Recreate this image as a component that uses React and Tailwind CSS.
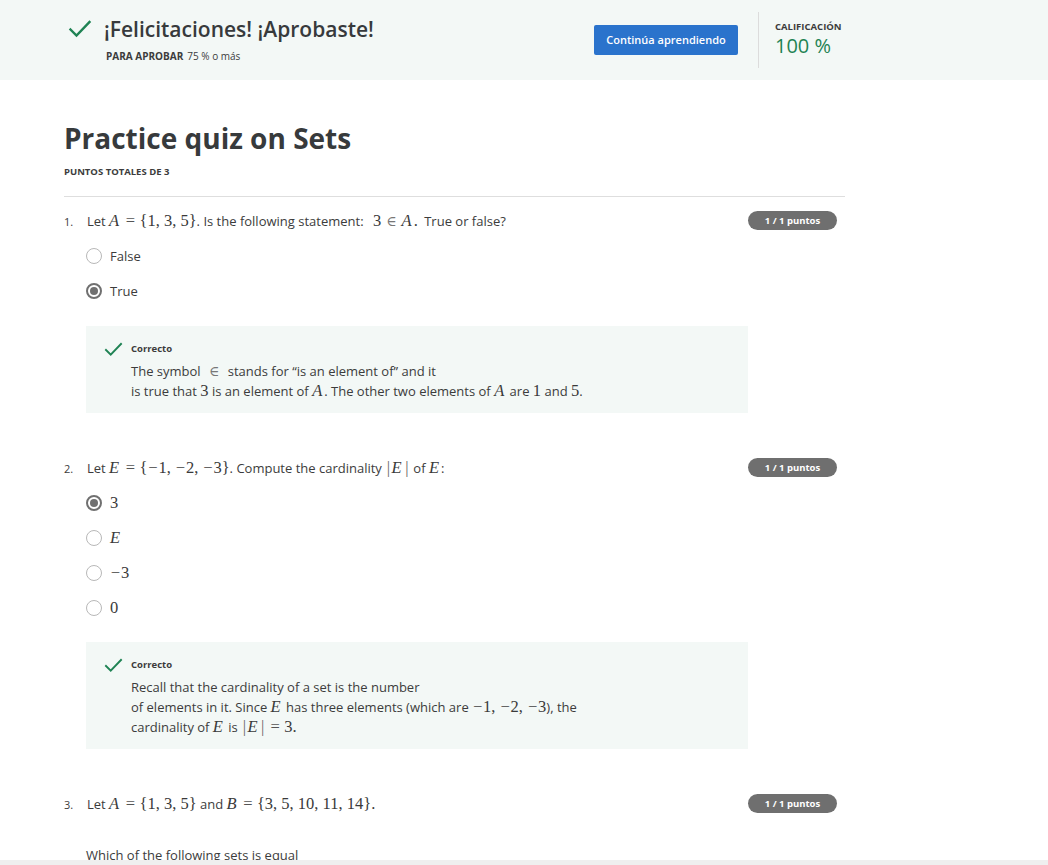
import React from 'react';

const Check = ({ className = 'w-[22px] h-[22px]' }) => (
  <svg viewBox="0 0 24 24" className={className} fill="none" stroke="#1f8354" strokeWidth="2.4" strokeLinecap="square">
    <path d="M2.5 12.5l6 6L21.5 5" />
  </svg>
);

const M = ({ children }) => (
  <span className="font-['Liberation_Serif',serif] text-[16.5px] leading-[10px] text-[#3a3a3a]">{children}</span>
);
const V = ({ children }) => <i className="font-['Liberation_Serif',serif] pr-[2px]">{children}</i>;
const Op = ({ children }) => <span className="mx-[4.5px] text-[#555]">{children}</span>;
const Mi = () => <span className="inline-block w-[11px] text-center text-[#555]">−</span>;
const Bar = () => <span className="px-[1.5px] text-[#666]">|</span>;
const In = () => <span className="mx-[5px] font-['DejaVu_Serif',serif] text-[14px] text-[#777]">∈</span>;

const Badge = () => (
  <span className="shrink-0 mr-[8px] inline-flex items-center justify-center w-[89px] h-[19px] rounded-full bg-[#6f6f6f] text-white text-[9.5px] font-bold">
    1 / 1 puntos
  </span>
);

const Radio = ({ checked, children }) => (
  <div className="flex items-center h-[35px]">
    {checked ? (
      <span className="w-[16px] h-[16px] rounded-full border-2 border-[#707070] flex items-center justify-center">
        <span className="w-[8px] h-[8px] rounded-full bg-[#707070]" />
      </span>
    ) : (
      <span className="w-[16px] h-[16px] rounded-full border-[1.5px] border-[#b8b8b8]" />
    )}
    <span className="ml-[8px] text-[13px] leading-[20px] text-[#3c3c3c]">{children}</span>
  </div>
);

const Question = ({ num, text, children }) => (
  <div>
    <div className="flex items-start justify-between">
      <div className="flex items-baseline text-[13px] leading-[20px] text-[#3c3c3c]">
        <span className="w-[23px] text-[11px]">{num}.</span>
        <span>{text}</span>
      </div>
      <Badge />
    </div>
    {children}
  </div>
);

const Feedback = ({ children }) => (
  <div className="ml-[22px] w-[662px] bg-[#f3f8f6] pt-[15px] pb-[12px] pl-[18px]">
    <div className="flex items-center h-[16px]">
      <Check className="w-[19px] h-[19px]" />
      <span className="ml-[8px] text-[9.5px] font-bold text-[#3c3c3c]">Correcto</span>
    </div>
    <div className="ml-[27px] mt-[4px] text-[13px] leading-[20px] text-[#3c3c3c]">{children}</div>
  </div>
);

export default function App() {
  return (
    <div className="h-screen flex flex-col bg-white font-['Open_Sans',sans-serif] text-[#373a3c]">
      <div className="flex-1 overflow-hidden">
        <header className="h-[80px] bg-[#f3f8f6] flex items-center">
          <div className="ml-[68px] w-[780px] flex items-center justify-between">
            <div className="flex flex-col mt-[-2px]">
              <div className="flex items-center">
                <Check className="w-[24px] h-[24px]" />
                <h1 className="ml-[12px] text-[21px] font-semibold leading-[30px] text-[#373a3c]">
                  ¡Felicitaciones! ¡Aprobaste!
                </h1>
              </div>
              <div className="ml-[38px] mt-[5px] text-[10px] text-[#3c3c3c]">
                <span className="font-bold">PARA APROBAR</span>
                <span className="ml-[4px]">75 % o más</span>
              </div>
            </div>
            <div className="flex items-center">
              <button className="w-[144px] h-[30px] rounded-[2px] bg-[#2a73cc] text-white text-[11px] font-semibold">
                Continúa aprendiendo
              </button>
              <div className="ml-[20px] w-px h-[56px] bg-[#dcdcdc]" />
              <div className="ml-[16px] w-[73px] flex flex-col">
                <span className="text-[9.5px] font-bold text-[#3c3c3c] leading-[12px]">CALIFICACIÓN</span>
                <span className="text-[20px] leading-[26px] text-[#1f8354]">100 %</span>
              </div>
            </div>
          </div>
        </header>

        <main className="ml-[64px] w-[781px]">
          <h2 className="mt-[39px] text-[28px] font-bold leading-[38px] text-[#373a3c]">Practice quiz on Sets</h2>
          <div className="mt-[8px] text-[9.5px] font-bold text-[#3c3c3c]">PUNTOS TOTALES DE 3</div>
          <div className="mt-[17px] h-px bg-[#dedede]" />

          <div className="mt-[14px]">
            <Question
              num="1"
              text={
                <>
                  Let <M><V>A</V><Op>=</Op>{'{'}1, 3, 5{'}'}</M>. Is the following statement:{' '}
                  <M><span className="ml-[6px]">3</span><In /><V>A</V>.</M>{' '}
                  <span className="ml-[3px]">True or false?</span>
                </>
              }
            >
              <div className="ml-[22px] mt-[6px]">
                <Radio>False</Radio>
                <Radio checked>True</Radio>
              </div>
              <div className="mt-[18px]">
                <Feedback>
                  The symbol <In /> stands for “is an element of” and it
                  <br />
                  is true that <M>3</M> is an element of <M><V>A</V></M>. The other two elements of{' '}
                  <M><V>A</V></M> are <M>1</M> and <M>5</M>.
                </Feedback>
              </div>
            </Question>
          </div>

          <div className="mt-[45px]">
            <Question
              num="2"
              text={
                <>
                  Let <M><V>E</V><Op>=</Op>{'{'}<Mi />1, <Mi />2, <Mi />3{'}'}</M>. Compute the cardinality{' '}
                  <M><Bar /><V>E</V><Bar /></M> of <M><V>E</V></M>:
                </>
              }
            >
              <div className="ml-[22px] mt-[6px]">
                <Radio checked><M>3</M></Radio>
                <Radio><M><V>E</V></M></Radio>
                <Radio><M><Mi />3</M></Radio>
                <Radio><M>0</M></Radio>
              </div>
              <div className="mt-[17px]">
                <Feedback>
                  Recall that the cardinality of a set is the number
                  <br />
                  of elements in it. Since <M><V>E</V></M> has three elements (which are{' '}
                  <M><Mi />1, <Mi />2, <Mi />3</M>), the
                  <br />
                  cardinality of <M><V>E</V></M> is <M><Bar /><V>E</V><Bar /><Op>=</Op>3.</M>
                </Feedback>
              </div>
            </Question>
          </div>

          <div className="mt-[45px]">
            <Question
              num="3"
              text={
                <>
                  Let <M><V>A</V><Op>=</Op>{'{'}1, 3, 5{'}'}</M> and{' '}
                  <M><V>B</V><Op>=</Op>{'{'}3, 5, 10, 11, 14{'}'}.</M>
                </>
              }
            >
              <div className="ml-[22px] mt-[30px] text-[13px] leading-[20px] text-[#3c3c3c]">Which of the following sets is equal</div>
            </Question>
          </div>
        </main>
      </div>
      <div className="h-[5px] bg-[#efefef]" />
    </div>
  );
}
